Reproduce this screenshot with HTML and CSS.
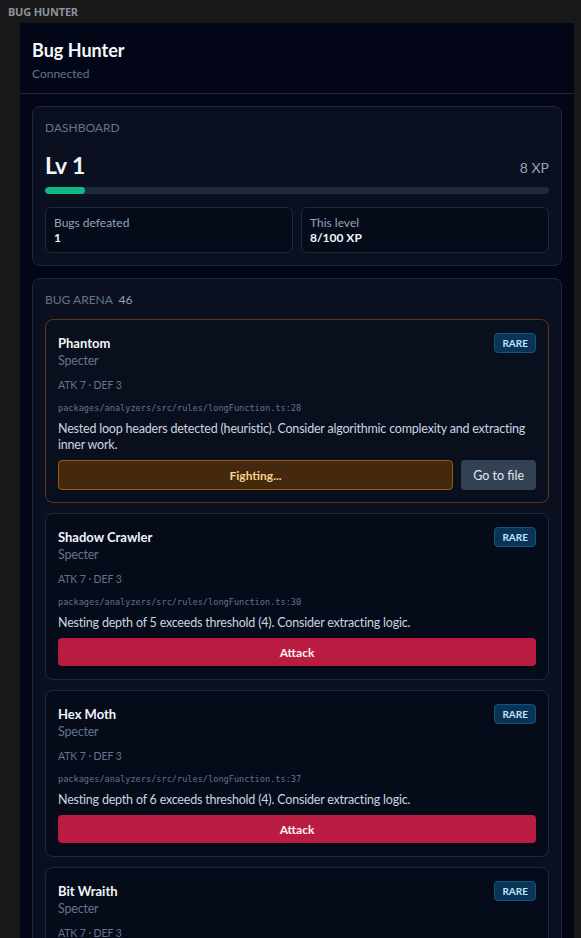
FILE: index.html
```html
<!DOCTYPE html>
<html>
<head>
  <title>Bug Hunter</title>
  <link rel="stylesheet" href="styles.css">
</head>
<body>
  <div class="titlebar">BUG HUNTER</div>

  <div class="frame">
    <div class="webview">
      <div class="header">
        <div class="app-title">Bug Hunter</div>
        <div class="status">Connected</div>
      </div>

      <div class="content">
        <div class="panel">
          <div class="panel-label">DASHBOARD</div>
          <div class="level-row">
            <span class="level">Lv 1</span>
            <span class="xp">8 XP</span>
          </div>
          <div class="progress"><div class="progress-fill" style="width: 8%"></div></div>
          <div class="stats">
            <div class="stat">
              <div class="stat-label">Bugs defeated</div>
              <div class="stat-value">1</div>
            </div>
            <div class="stat">
              <div class="stat-label">This level</div>
              <div class="stat-value">8/100 XP</div>
            </div>
          </div>
        </div>

        <div class="panel">
          <div class="panel-label arena-label">BUG ARENA <span class="count">46</span></div>

          <div class="bug fighting">
            <div class="bug-head">
              <div class="bug-name">Phantom</div>
              <span class="badge">RARE</span>
            </div>
            <div class="bug-kind">Specter</div>
            <div class="bug-stats">ATK 7 · DEF 3</div>
            <div class="bug-path">packages/analyzers/src/rules/longFunction.ts:28</div>
            <div class="bug-desc">Nested loop headers detected (heuristic). Consider algorithmic complexity and extracting inner work.</div>
            <div class="actions">
              <button class="btn btn-fighting">Fighting...</button>
              <button class="btn btn-file">Go to file</button>
            </div>
          </div>

          <div class="bug">
            <div class="bug-head">
              <div class="bug-name">Shadow Crawler</div>
              <span class="badge">RARE</span>
            </div>
            <div class="bug-kind">Specter</div>
            <div class="bug-stats">ATK 7 · DEF 3</div>
            <div class="bug-path">packages/analyzers/src/rules/longFunction.ts:30</div>
            <div class="bug-desc">Nesting depth of 5 exceeds threshold (4). Consider extracting logic.</div>
            <div class="actions">
              <button class="btn btn-attack">Attack</button>
            </div>
          </div>

          <div class="bug">
            <div class="bug-head">
              <div class="bug-name">Hex Moth</div>
              <span class="badge">RARE</span>
            </div>
            <div class="bug-kind">Specter</div>
            <div class="bug-stats">ATK 7 · DEF 3</div>
            <div class="bug-path">packages/analyzers/src/rules/longFunction.ts:37</div>
            <div class="bug-desc">Nesting depth of 6 exceeds threshold (4). Consider extracting logic.</div>
            <div class="actions">
              <button class="btn btn-attack">Attack</button>
            </div>
          </div>

          <div class="bug">
            <div class="bug-head">
              <div class="bug-name">Bit Wraith</div>
              <span class="badge">RARE</span>
            </div>
            <div class="bug-kind">Specter</div>
            <div class="bug-stats">ATK 7 · DEF 3</div>
            <div class="bug-path">packages/analyzers/src/rules/longFunction.ts:44</div>
            <div class="bug-desc">Nesting depth of 7 exceeds threshold (4). Consider extracting logic.</div>
            <div class="actions">
              <button class="btn btn-attack">Attack</button>
            </div>
          </div>
        </div>
      </div>
    </div>
  </div>
</body>
</html>
```

FILE: styles.css
```css
html, body {
  margin: 0;
  padding: 0;
  height: 100%;
}

body {
  background-color: #181818;
  font-family: Lato, "Noto Sans", sans-serif;
  color: #e2e8f0;
  overflow: hidden;
}

.titlebar {
  height: 23px;
  line-height: 23px;
  padding-left: 8px;
  font-family: "Noto Sans", sans-serif;
  font-size: 11px;
  font-weight: 700;
  color: #8b949e;
  letter-spacing: -0.2px;
}

.frame {
  padding: 0 7px 0 20px;
}

.webview {
  background-color: #020617;
  min-height: 915px;
}

.header {
  padding: 14px 12px 10px;
  border-bottom: 1px solid #1e293b;
}

.app-title {
  font-size: 18px;
  font-weight: 700;
  line-height: 26px;
  color: #f8fafc;
}

.status {
  font-size: 12px;
  line-height: 16px;
  margin-top: 3px;
  margin-bottom: 1px;
  color: #64748b;
}

.content {
  padding: 12px;
}

.panel {
  background-color: #0a1020;
  border: 1px solid #1e293b;
  border-radius: 8px;
  padding: 13px 12px 12px;
  margin-bottom: 12px;
}

.panel-label {
  font-size: 12px;
  line-height: 16px;
  color: #64748b;
}

.level-row {
  display: flex;
  justify-content: space-between;
  align-items: center;
  margin-top: 13px;
  height: 32px;
}

.level {
  font-size: 23px;
  font-weight: 700;
  color: #f1f5f9;
}

.xp {
  font-size: 14px;
  color: #94a3b8;
  margin-top: 4px;
}

.progress {
  height: 7px;
  margin-top: 6px;
  background-color: #1e293b;
  border-radius: 4px;
  overflow: hidden;
}

.progress-fill {
  height: 100%;
  background-color: #10b981;
  border-radius: 4px;
}

.stats {
  display: grid;
  grid-template-columns: 1fr 1fr;
  gap: 8px;
  margin-top: 13px;
}

.stat {
  border: 1px solid #1e293b;
  border-radius: 6px;
  background-color: #050b19;
  padding: 7px 8px;
}

.stat-label {
  font-size: 12px;
  line-height: 15px;
  color: #94a3b8;
}

.stat-value {
  font-size: 12px;
  line-height: 15px;
  font-weight: 700;
  color: #f1f5f9;
}

.arena-label {
  margin-bottom: 11px;
}

.count {
  color: #94a3b8;
  margin-left: 3px;
}

.bug {
  background-color: #050b19;
  border: 1px solid #1e293b;
  border-radius: 8px;
  padding: 13px 12px 13px;
  margin-bottom: 10px;
}

.bug.fighting {
  background-color: #0a0f1e;
  border-color: #5a3a14;
  padding-bottom: 12px;
}

.bug-head {
  display: flex;
  justify-content: space-between;
  align-items: flex-start;
}

.bug-name {
  font-size: 13px;
  line-height: 20px;
  font-weight: 700;
  color: #f1f5f9;
}

.badge {
  padding: 0 7px;
  height: 18px;
  line-height: 18px;
  font-size: 10px;
  font-weight: 700;
  color: #bae6fd;
  background-color: #0c3356;
  border: 1px solid #075985;
  border-radius: 4px;
}

.bug-kind {
  font-size: 12.5px;
  letter-spacing: -0.2px;
  line-height: 16px;
  color: #64748b;
}

.bug-stats {
  font-size: 10.5px;
  letter-spacing: -0.1px;
  line-height: 16px;
  margin-top: 8px;
  color: #64748b;
}

.bug-path {
  font-family: "DejaVu Sans Mono", "Liberation Mono", monospace;
  font-size: 8.6px;
  line-height: 14px;
  margin-top: 8px;
  color: #64748b;
}

.bug-desc {
  font-size: 12.5px;
  letter-spacing: -0.2px;
  line-height: 16px;
  margin-top: 6px;
  color: #cbd5e1;
}

.actions {
  display: flex;
  gap: 8px;
  margin-top: 7px;
}

.btn {
  font-family: inherit;
  height: 28px;
  border: none;
  border-radius: 4px;
  cursor: pointer;
  font-size: 12px;
  font-weight: 700;
}

.btn-fighting {
  flex: 1;
  height: 30px;
  background-color: #44290f;
  border: 1px solid #a0580f;
  color: #fcd089;
}

.btn-file {
  height: 30px;
  padding: 0 12px;
  background-color: #334155;
  color: #e2e8f0;
  font-size: 12.5px;
  font-weight: 400;
}

.btn-attack {
  flex: 1;
  background-color: #b91c40;
  color: #fff1f2;
}
```
